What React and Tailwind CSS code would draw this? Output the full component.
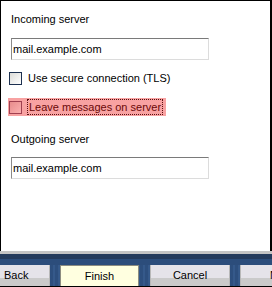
import React from "react";

const font = { fontFamily: '"Liberation Sans", Arial, sans-serif' };

const Field = ({ value }) => (
  <div className="ml-[10px] h-[22px] w-[198px] border border-t-[#7a7a7a] border-l-[#8a8a8a] border-r-[#dcdcdc] border-b-[#dcdcdc] bg-white pl-[1px] text-[11px] leading-[20px] text-black">
    {value}
  </div>
);

const Check = ({ focused }) => (
  <div
    className={
      focused
        ? "h-[13px] w-[13px] border border-[#a04050] bg-[linear-gradient(135deg,#e88c8c,#fbb0b0)]"
        : "h-[13px] w-[13px] border border-[#1c3050] bg-[linear-gradient(135deg,#dcdcd8,#ffffff)]"
    }
  />
);

const Button = ({ children, className }) => (
  <div
    className={
      "h-[21px] shrink-0 text-[11px] leading-[20px] text-black " + className
    }
  >
    {children}
  </div>
);

export default function App() {
  return (
    <div className="flex h-[287px] w-[272px] flex-col overflow-hidden border-b border-black bg-white" style={font}>
      {/* form area */}
      <div className="flex h-[251px] flex-col border-l border-r-2 border-t border-black pt-[12px]">
        <div className="ml-[10px] h-[13px] text-[11px] leading-[13px] text-black">Incoming server</div>
        <div className="mt-[12px]">
          <Field value="mail.example.com" />
        </div>
        <div className="ml-[8px] mt-[11px] flex h-[14px] items-center gap-[6px]">
          <Check />
          <span className="text-[11px] leading-[13px] text-black">Use secure connection (TLS)</span>
        </div>
        <div className="ml-[7px] mt-[13px] flex h-[18px] w-[158px] items-center gap-[5px] bg-[#f8a2a2] pl-[1px]">
          <Check focused />
          <span className="border border-dotted border-[#5a1010] px-[1px] text-[11px] leading-[14px] text-[#6a0808]">
            Leave messages on server
          </span>
        </div>
        <div className="ml-[10px] mt-[17px] h-[13px] text-[11px] leading-[13px] text-black">Outgoing server</div>
        <div className="mt-[11px]">
          <Field value="mail.example.com" />
        </div>
      </div>

      {/* button bar */}
      <div className="h-[3px] bg-[#c4c4c4]" />
      <div className="h-[5px] bg-[#243b5c]" />
      <div className="h-[6px] bg-[#2c4d7b]" />
      <div className="flex h-[21px] bg-[#2d4f7e] bg-[repeating-linear-gradient(90deg,#2d4f7e_0px,#2d4f7e_3px,#35598a_3px,#35598a_5px)]">
        <Button className="w-[50px] border-r border-[#b8b8b8] bg-[linear-gradient(to_bottom,#e5e3e9_60%,#cacaca_60%)] pl-[4px]">
          Back
        </Button>
        <Button className="ml-[10px] w-[79px] border border-b-0 border-[#8c8c80] bg-[#ffffe0] text-center">
          Finish
        </Button>
        <Button className="ml-[11px] w-[80px] border-x border-[#b8b8b8] bg-[linear-gradient(to_bottom,#e5e3e9_60%,#cacaca_60%)] text-center">
          Cancel
        </Button>
        <Button className="ml-[10px] w-[80px] border-l border-[#b8b8b8] bg-[linear-gradient(to_bottom,#e5e3e9_60%,#cacaca_60%)] pl-[29px]">
          Next
        </Button>
      </div>
    </div>
  );
}
